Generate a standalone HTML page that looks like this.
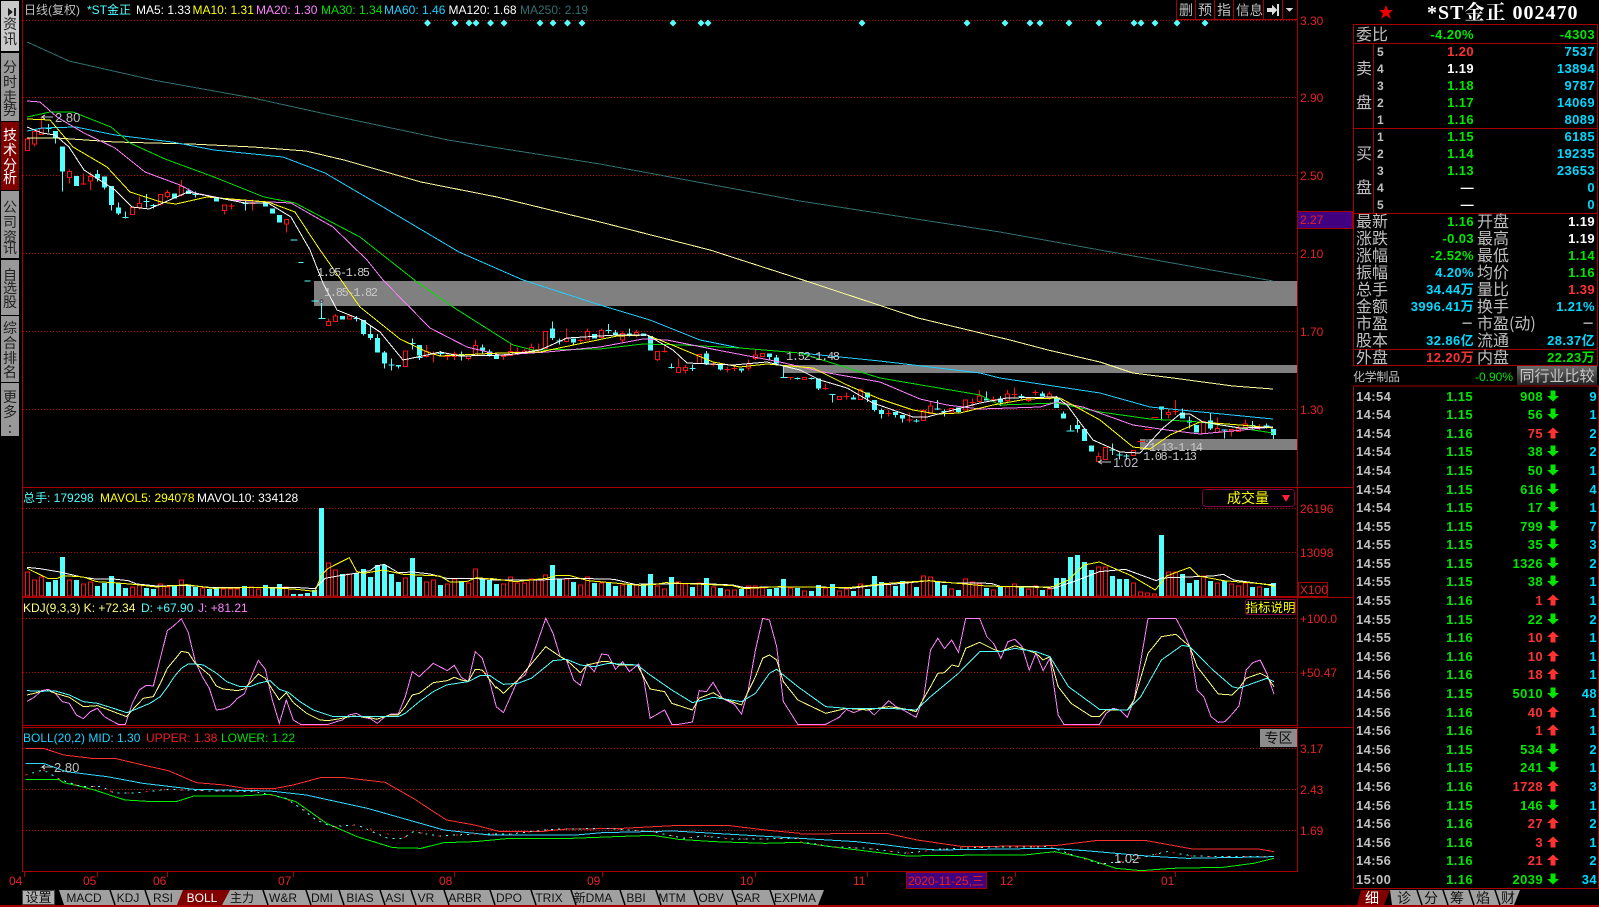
<!DOCTYPE html>
<html><head><meta charset="utf-8"><title>*ST金正 002470</title>
<style>
html,body{margin:0;padding:0;background:#000;overflow:hidden}
svg{display:block}
text{font-family:"Liberation Sans","Noto Sans CJK SC",sans-serif;font-size:12px}
path,polyline,line{vector-effect:non-scaling-stroke;shape-rendering:crispEdges;fill:none}
.cw{stroke:#54ffff}.cb{stroke:#54ffff;stroke-width:5}.rw{stroke:#ff1010}.rb{stroke:#ff1010;fill:#000}
.n{font-weight:bold;font-size:13px;letter-spacing:.4px}
.e{text-anchor:end}.c{text-anchor:middle}
.l{font-size:16px;fill:#c0c0c0;font-family:"WenQuanYi Zen Hei","Noto Sans CJK SC",sans-serif}
.g{fill:#00e600}.r{fill:#ff3232}.w{fill:#fff}.y{fill:#00d8ff}.a{fill:#c0c0c0}
.ax{fill:#e62222}
.m{font-family:"Liberation Mono",monospace;fill:#c8c8c8}
.t{fill:#111;text-anchor:middle}
.s{font-size:14px;fill:#222;font-family:"WenQuanYi Zen Hei","Noto Sans CJK SC",sans-serif}
.grid{stroke:#c00000;stroke-dasharray:1 2}
.b{stroke:#a80000}
</style></head><body>
<svg width="1599" height="907" viewBox="0 0 1599 907" xmlns="http://www.w3.org/2000/svg">
<defs>
<linearGradient id="bg" x1="0" y1="0" x2="0" y2="1"><stop offset="0" stop-color="#6a6a6a"/><stop offset="1" stop-color="#222"/></linearGradient>
<path id="d" d="M-2.5 -5.5h5v5.5h3.5l-6 5.5l-6 -5.5h3.5z" style="fill:#00e600;stroke:none;shape-rendering:auto"/>
<path id="u" d="M-2.5 5.5h5v-5.5h3.5l-6 -5.5l-6 5.5h3.5z" style="fill:#ff3232;stroke:none;shape-rendering:auto"/>
</defs>
<rect width="1599" height="907" fill="#000"/>

<!-- left rail -->
<rect x="1" y="1" width="18" height="50" fill="#c8c8c8"/>
<rect x="1" y="53" width="18" height="68" fill="#999"/>
<rect x="1" y="122" width="18" height="68" fill="#800000"/>
<rect x="1" y="191" width="18" height="67" fill="#999"/>
<rect x="1" y="260" width="18" height="55" fill="#999"/>
<rect x="1" y="316" width="18" height="66" fill="#999"/>
<rect x="1" y="383" width="18" height="53" fill="#999"/>
<path d="M8 8l5 4l-5 4zM14 8h2v8h-2z" style="fill:#222;stroke:none"/>
<text class="s" x="3 3" y="29 44">资讯</text>
<text class="s" x="3 3 3 3" y="72 87 102 115">分时走势</text>
<text class="s" x="3 3 3 3" y="140 155 170 183" style="fill:#fff">技术分析</text>
<text class="s" x="3 3 3 3" y="212 227 242 253">公司资讯</text>
<text class="s" x="3 3 3" y="280 293 307">自选股</text>
<text class="s" x="3 3 3 3" y="333 348 363 377">综合排名</text>
<text class="s" x="3 3" y="402 417">更多</text>
<text class="s" x="8 8" y="427 433">..</text>

<!-- grid -->
<g class="grid">
<path d="M23 20.5H1297M23 97.5H1297M23 175.5H1297M23 253.5H1297M23 331.5H1297M23 409.5H1297M23 508.5H1297M23 552.5H1297M23 618.5H1297M23 672.5H1297M23 748.5H1297M23 789.5H1297M23 830.5H1297"/>
</g>

<!-- zones -->
<rect x="314" y="281" width="983" height="25" fill="#808080"/>
<rect x="783" y="365" width="514" height="8" fill="#808080"/>
<rect x="1140" y="439" width="157" height="11" fill="#808080"/>

<!-- diamonds -->
<path style="fill:#54ffff;stroke:none;shape-rendering:auto" d="M427.500 19.500l3.500 3.500l-3.500 3.500l-3.500 -3.500zM455 19.500l3.500 3.500l-3.500 3.500l-3.500 -3.500zM469 19.500l3.500 3.500l-3.500 3.500l-3.500 -3.500zM476 19.500l3.500 3.500l-3.500 3.500l-3.500 -3.500zM490.500 19.500l3.500 3.500l-3.500 3.500l-3.500 -3.500zM504 19.500l3.500 3.500l-3.500 3.500l-3.500 -3.500zM540 19.500l3.500 3.500l-3.500 3.500l-3.500 -3.500zM553 19.500l3.500 3.500l-3.500 3.500l-3.500 -3.500zM567.500 19.500l3.500 3.500l-3.500 3.500l-3.500 -3.500zM582 19.500l3.500 3.500l-3.500 3.500l-3.500 -3.500zM673 19.500l3.500 3.500l-3.500 3.500l-3.500 -3.500zM701 19.500l3.500 3.500l-3.500 3.500l-3.500 -3.500zM708 19.500l3.500 3.500l-3.500 3.500l-3.500 -3.500zM862 19.500l3.500 3.500l-3.500 3.500l-3.500 -3.500zM967 19.500l3.500 3.500l-3.500 3.500l-3.500 -3.500zM1005 19.500l3.500 3.500l-3.500 3.500l-3.500 -3.500zM1030 19.500l3.500 3.500l-3.500 3.500l-3.500 -3.500zM1040 19.500l3.500 3.500l-3.500 3.500l-3.500 -3.500zM1069 19.500l3.500 3.500l-3.500 3.500l-3.500 -3.500zM1099 19.500l3.500 3.500l-3.500 3.500l-3.500 -3.500zM1134 19.500l3.500 3.500l-3.500 3.500l-3.500 -3.500zM1141 19.500l3.500 3.500l-3.500 3.500l-3.500 -3.500zM1155 19.500l3.500 3.500l-3.500 3.500l-3.500 -3.500zM1177 19.500l3.500 3.500l-3.500 3.500l-3.500 -3.500zM1205 19.500l3.500 3.500l-3.500 3.500l-3.500 -3.500z"/>

<!-- candles -->
<g transform="translate(.5,0) scale(1,.3333)">
<path class="cw" d="M48 372V398M45 385h6M55 413V430M62 515V575M97 510V545M104 562V568M111 615V632M118 608V645M125 635V655M122 652h6M146 582V622M143 604h6M153 612V625M150 617h6M188 565V572M195 575V592M192 583h6M245 600V632M242 610h6M290 720h7M298 787h5M304 843h6M311 903h7"/>
<path class="cb" d="M55 393V413M62 440V515M76 528V558M97 522V535M104 530V562M111 558V615M118 622V640M174 580V595M188 572V582M216 592V604M265 604V620M272 625V640M279 645V668"/>
<path class="rw" d="M34 432V440M41 350V385M69 508V550M83 520V555M80 552h6M90 517V570M139 590V628M160 583V617M167 570V595M181 540V590M224 632V644M231 610V628M228 618h6M252 598V632M249 610h6M286 672V698"/>
<path class="rb" d="M25 417h4V452h-4zM32 394h4V432h-4zM39 385h4V403h-4zM67 515h4V533h-4zM88 530h4V543h-4zM130 622h4V644h-4zM137 610h4V622h-4zM158 583h4V612h-4zM165 577h4V590h-4zM179 560h4V585h-4zM222 615h4V632h-4zM284 658h4V672h-4z"/>
</g>
<g transform="translate(.5,250) scale(1,.3333)">
<path class="cw" d="M321 153V205M318 205h7M356 198V215M353 205h6M363 252V257M370 228V270M377 252V264M384 303V355M391 325V362M388 345h6M398 350V356M412 265V298M409 280h6M419 315V330M416 322h6M440 303V318M437 310h6M461 305V332M482 283V312M489 298V320M552 215V270M559 265V283M556 273h6M573 278V285M608 222V250M605 241h6M615 240V247M629 235V260M671 340V355M668 352h6M692 343V363M689 355h6M706 303V345M720 358V362M741 362V368M769 321V332M776 315V345"/>
<path class="cb" d="M342 198V209M363 210V252M370 252V264M377 264V308M384 308V340M398 345V350M419 285V316M461 312V318M482 292V302M489 305V315M496 315V327M552 235V264M573 265V278M594 252V265M615 247V257M629 250V258M643 250V258M650 258V302M706 310V340M720 345V358M741 355V362M769 310V321M776 322V340"/>
<path class="rw" d="M328 205V215M335 192V198M426 285V305M426 320V322M433 305V338M430 312h6M447 310V330M444 320h6M454 305V312M454 320V330M468 326V332M475 270V287M503 320V330M510 280V305M517 293V315M514 306h6M524 297V303M531 280V293M538 280V305M535 298h6M566 235V265M580 265V282M577 272h6M587 235V245M601 235V241M622 245V250M622 270V278M636 240V247M636 255V262M657 328V333M664 290V308M661 305h6M678 325V352M685 345V352M685 362V370M713 335V350M710 343h6M727 350V368M724 358h6M734 348V363M731 355h6M748 328V342M748 354V362M755 300V315M755 326V330"/>
<path class="rb" d="M326 215h4V226h-4zM333 198h4V214h-4zM347 198h4V207h-4zM403 303h4V350h-4zM424 305h4V320h-4zM452 312h4V320h-4zM466 318h4V326h-4zM473 287h4V316h-4zM501 316h4V320h-4zM508 305h4V316h-4zM522 303h4V310h-4zM529 293h4V303h-4zM543 245h4V295h-4zM564 265h4V274h-4zM585 245h4V270h-4zM599 241h4V262h-4zM620 250h4V270h-4zM634 247h4V255h-4zM655 304h4V328h-4zM676 352h4V368h-4zM683 352h4V362h-4zM697 313h4V340h-4zM746 342h4V354h-4zM753 315h4V326h-4zM760 310h4V320h-4z"/>
</g>
<g transform="translate(.5,340) scale(1,.3333)">
<path class="cw" d="M783 80V113M780 113h7M797 112V118M794 115h6M811 112V118M808 115h6M818 145V150M832 163V187M829 163h6M853 165V172M867 173V186M874 210V215M881 205V236M895 225V232M902 236V248M916 237V248M913 243h6M937 180V210M934 207h6M944 208V230M941 215h6M958 216V218M986 155V175M1000 168V198M1021 162V177M1018 170h6M1042 155V161M1056 168V175M1063 215V221M1070 255V273M1066 273h8M1077 238V278"/>
<path class="cb" d="M818 115V145M853 172V178M867 157V173M874 180V210M881 210V222M895 216V225M902 225V236M958 203V216M986 175V181M1000 175V187M1042 161V170M1056 175V204M1063 221V236M1077 255V267"/>
<path class="rw" d="M790 113V120M787 113h6M825 130V150M822 145h6M839 168V172M846 158V178M843 170h6M860 145V150M888 210V230M885 220h6M909 218V248M906 240h6M930 185V198M972 175V200M969 187h6M979 150V168M993 170V178M1007 150V162M1007 182V190M1014 143V172M1011 163h6M1028 181V186M1035 150V166M1032 157h6M1049 155V162M1049 172V180"/>
<path class="rb" d="M802 112h4V119h-4zM837 170h4V178h-4zM858 150h4V178h-4zM921 212h4V242h-4zM928 198h4V220h-4zM949 205h4V216h-4zM963 180h4V210h-4zM977 168h4V185h-4zM991 178h4V183h-4zM1005 162h4V182h-4zM1026 175h4V181h-4zM1047 162h4V172h-4z"/>
</g>
<g transform="translate(.5,350) scale(1,.3333)">
<path class="cw" d="M1112 280V315M1109 300h6M1119 308V328M1116 315h6M1126 312V330M1123 318h6M1161 178V212M1182 175V187M1189 200V235M1210 190V212M1210 236V240M1224 240V265M1221 240h6M1252 213V238M1249 226h6M1266 220V235M1263 228h6M1273 255V267"/>
<path class="cb" d="M1084 237V273M1091 286V305M1161 170V178M1182 187V206M1189 212V218M1196 225V248M1210 212V236M1273 237V255"/>
<path class="rw" d="M1098 308V319M1137 275h7M1144 238h7M1151 203h7M1168 175V187M1168 194V205M1175 150V195M1172 185h6M1217 202V236M1231 245V260M1238 228V235M1245 208V222M1259 222V240M1256 232h6"/>
<path class="rb" d="M1096 319h4V335h-4zM1103 292h4V328h-4zM1131 302h4V316h-4zM1166 187h4V194h-4zM1201 215h4V250h-4zM1215 236h4V247h-4zM1229 238h4V245h-4zM1236 235h4V245h-4zM1243 222h4V232h-4z"/>
</g>

<!-- MA lines -->
<polyline stroke="#2f6f70" points="27,42 69,61 153,80 253,98 344,118 448,140 600,164 800,201 1000,232 1150,259 1273,281"/>
<polyline stroke="#ffffa0" points="27,138 57,138 115,142 191,144 253,147 306,151 344,160 421,182 497,197 600,222 710,250 800,279 918,318 1010,340 1048,350 1100,362 1133,373 1173,378 1233,386 1273,389"/>
<polyline stroke="#20d0ff" points="27,131 42,128 76,127 115,135 172,142 214,150 283,157 325,173 383,207 459,252 523,280 600,305 650,320 700,340 740,348 800,353 880,361 980,373 1000,378 1100,393 1150,407 1273,419"/>
<polyline stroke="#00e000" points="27,117 50,112 73,112 111,127 130,143 165,159 214,177 264,197 295,203 360,237 417,282 453,307 513,345 533,350 600,349 643,344 683,345 740,348 800,353 880,378 980,395 1000,405 1057,403 1100,412 1150,419 1200,422 1273,433"/>
<polyline stroke="#ff80ff" points="27,101 40,102 57,117 84,133 115,148 145,172 180,185 195,193 230,200 291,203 333,227 367,260 383,280 430,328 467,347 500,355 547,352 600,347 643,339 667,340 717,350 780,362 823,372 880,382 920,399 947,405 980,409 1040,407 1057,402 1083,407 1133,425 1167,430 1200,434 1273,427"/>
<polyline stroke="#ffff00" points="27,119 50,120 73,147 107,167 130,192 161,202 176,204 207,197 268,202 295,212 318,247 360,307 400,339 427,352 440,356 500,353 540,352 583,343 617,336 647,335 677,347 713,362 740,367 767,364 813,368 847,385 880,399 913,410 937,414 960,413 993,405 1027,399 1060,398 1100,420 1133,447 1150,449 1170,435 1200,422 1240,425 1273,428"/>
<polyline stroke="#ffffff" points="27,127 42,133 55,135 69,147 84,170 115,190 132,207 149,209 188,192 245,203 268,203 291,217 310,250 323,283 337,310 362,320 380,332 403,360 427,355 440,352 460,356 507,355 540,350 567,338 617,335 647,335 673,350 687,363 733,365 767,362 800,370 820,380 847,388 873,403 913,417 927,417 953,410 980,403 1007,398 1057,397 1067,405 1093,440 1120,452 1140,453 1163,428 1180,414 1190,414 1203,422 1240,428 1273,427"/>

<!-- main annotations -->
<text x="55" y="122" style="fill:#c0c0c0;font-size:13px">2.80</text>
<path d="M53 117H42l3-2M42 117l3 2" style="stroke:#c0c0c0"/>
<text class="m" x="317" y="276" textLength="53">1.95-1.85</text>
<text class="m" x="324" y="296" textLength="54">1.85-1.82</text>
<text class="m" x="786" y="360" textLength="54">1.52-1.48</text>
<text class="m" x="1149" y="451" textLength="54">1.13-1.14</text>
<text class="m" x="1143" y="460" textLength="54">1.08-1.13</text>
<text x="1113" y="467" style="fill:#b8b8c8;font-size:13px">1.02</text>
<path d="M1111 462H1098l4-2M1098 462l4 2" style="stroke:#c0c0c0"/>
<circle cx="321.500" cy="301" r="1.500" fill="none" stroke="#555"/><circle cx="1147" cy="441" r="1.500" fill="none" stroke="#444"/>

<!-- volume bars -->
<g transform="translate(.5,0)">
<path class="cb" d="M48 582V596M55 580V596M62 557V596M76 580V596M97 586V596M104 583V596M111 576V596M118 583V596M125 588V596M146 588V596M153 589V596M174 586V596M188 586V596M195 587V596M209 589V596M216 587V596M244 586V596M265 585V596M272 587V596M279 584V596M293 594V596M300 594V596M307 593V596M314 590V596M321 508V596M342 574V596M356 573V596M363 569V596M370 577V596M377 565V596M384 565V596M391 574V596M398 582V596M412 558V596M419 577V596M440 585V596M461 581V596M482 578V596M489 580V596M496 584V596M552 565V596M559 579V596M573 582V596M594 583V596M608 583V596M615 586V596M629 584V596M643 585V596M650 574V596M671 577V596M692 587V596M706 578V596M720 588V596M741 589V596M769 589V596M776 588V596M783 579V596M797 588V596M811 591V596M818 585V596M832 584V596M853 591V596M867 589V596M874 576V596M881 582V596M895 586V596M902 581V596M916 587V596M937 582V596M944 585V596M958 590V596M986 588V596M1000 587V596M1021 587V596M1042 590V596M1056 578V596M1063 578V596M1070 557V596M1077 555V596M1084 562V596M1091 570V596M1112 576V596M1119 579V596M1126 579V596M1161 535V596M1182 574V596M1189 583V596M1196 580V596M1210 581V596M1224 581V596M1252 587V596M1266 588V596M1273 583V596"/>
<path class="rw" d="M25 572h4V596h-4zM32 580h4V596h-4zM39 577h4V596h-4zM67 580h4V596h-4zM81 584h4V596h-4zM88 582h4V596h-4zM130 587h4V596h-4zM137 585h4V596h-4zM158 584h4V596h-4zM165 587h4V596h-4zM179 580h4V596h-4zM200 588h4V596h-4zM221 589h4V596h-4zM228 589h4V596h-4zM235 589h4V596h-4zM249 587h4V596h-4zM256 589h4V596h-4zM284 587h4V596h-4zM326 563h4V596h-4zM333 570h4V596h-4zM347 574h4V596h-4zM403 578h4V596h-4zM424 582h4V596h-4zM431 580h4V596h-4zM445 584h4V596h-4zM452 579h4V596h-4zM466 583h4V596h-4zM473 569h4V596h-4zM501 584h4V596h-4zM508 577h4V596h-4zM515 583h4V596h-4zM522 583h4V596h-4zM529 579h4V596h-4zM536 579h4V596h-4zM543 575h4V596h-4zM564 579h4V596h-4zM578 585h4V596h-4zM585 577h4V596h-4zM599 583h4V596h-4zM620 585h4V596h-4zM634 585h4V596h-4zM655 586h4V596h-4zM662 589h4V596h-4zM676 582h4V596h-4zM683 584h4V596h-4zM697 583h4V596h-4zM711 587h4V596h-4zM725 590h4V596h-4zM732 590h4V596h-4zM746 586h4V596h-4zM753 586h4V596h-4zM760 588h4V596h-4zM788 588h4V596h-4zM802 591h4V596h-4zM823 588h4V596h-4zM837 591h4V596h-4zM844 589h4V596h-4zM858 584h4V596h-4zM886 584h4V596h-4zM907 582h4V596h-4zM921 576h4V596h-4zM928 577h4V596h-4zM949 589h4V596h-4zM963 579h4V596h-4zM970 582h4V596h-4zM977 584h4V596h-4zM991 590h4V596h-4zM1005 587h4V596h-4zM1012 584h4V596h-4zM1026 589h4V596h-4zM1033 586h4V596h-4zM1047 589h4V596h-4zM1096 567h4V596h-4zM1103 567h4V596h-4zM1131 583h4V596h-4zM1138 592h4V596h-4zM1145 593h4V596h-4zM1152 594h4V596h-4zM1166 572h4V596h-4zM1173 572h4V596h-4zM1201 576h4V596h-4zM1215 583h4V596h-4zM1229 584h4V596h-4zM1236 586h4V596h-4zM1243 583h4V596h-4zM1257 587h4V596h-4z"/>
</g>
<g transform="translate(0,480) scale(.3333)">
<polyline stroke="#fff" points="81,262 120,266 180,276 240,290 285,297 340,297 385,302 410,312 470,318 560,316 640,323 780,322 880,322 945,326 975,295 1020,287 1060,281 1110,272 1130,258 1153,253 1195,278 1240,276 1290,282 1340,295 1400,295 1485,298"/>
<polyline stroke="#ff0" points="81,265 145,296 170,296 190,287 250,291 290,305 340,308 400,313 470,321 560,314 640,325 780,322 880,327 945,334 965,285 985,265 1048,233 1070,274 1090,280 1150,270 1210,283 1320,288 1350,306 1400,305 1430,293 1485,298"/>
</g>
<g transform="translate(490,490) scale(.5165,.3333)">
<polyline stroke="#fff" points="0,270 100,270 130,267 170,265 240,268 280,283 400,280 470,285 490,292 640,291 700,295 740,287 800,280 850,272 880,278 970,280 990,290 1060,290 1090,295 1130,275 1180,245 1230,238 1290,272 1300,264 1400,258 1420,253 1440,270 1500,283 1520,285"/>
<polyline stroke="#ff0" points="0,265 50,275 110,265 130,256 155,257 190,272 290,286 320,283 340,278 470,287 490,296 560,290 640,292 700,292 770,280 850,272 960,288 1060,292 1090,290 1120,270 1150,225 1180,216 1240,256 1288,300 1310,258 1355,232 1372,258 1420,272 1500,282 1520,290"/>
</g>

<!-- KDJ -->
<g transform="translate(0,480) scale(.3333)">
<polyline stroke="#ff80ff" points="81,664 103,652 124,632 145,628 166,640 187,665 208,670 229,705 250,716 271,695 292,685 313,710 334,722 355,733 376,733 397,670 418,630 439,616 460,618 481,535 502,452 523,436 544,416 565,458 586,545 607,590 628,625 649,690 670,687 691,678 712,655 733,642 754,590 775,541 796,568 817,660 838,730 859,660 880,720 901,733 985,733 1006,726 1027,720 1048,705 1069,700 1090,712 1111,716 1132,730 1153,712 1174,702 1195,702 1216,650 1237,575 1258,590 1300,550 1342,572 1363,556 1384,592 1405,605 1426,515 1447,535 1468,600 1489,680"/>
<polyline stroke="#ffff80" points="81,645 103,640 124,634 145,632 166,640 208,652 250,680 292,677 340,695 380,710 397,690 430,655 460,650 481,610 502,565 523,540 544,514 565,518 586,550 628,585 649,618 670,627 712,632 733,627 754,605 775,582 796,595 817,628 838,660 859,638 880,668 920,700 960,720 985,722 1020,716 1060,708 1110,713 1130,718 1170,705 1195,705 1216,680 1237,645 1258,640 1300,608 1342,602 1363,592 1384,600 1405,604 1426,568 1447,570 1489,625"/>
<polyline stroke="#54ffff" points="81,632 124,634 166,633 208,645 250,665 292,670 340,685 380,698 397,692 450,670 481,650 502,622 523,590 544,565 565,552 586,552 610,555 650,580 680,605 720,620 750,620 775,610 810,602 838,628 865,637 900,665 940,690 1000,710 1100,710 1195,710 1216,700 1258,665 1300,635 1340,615 1384,608 1405,605 1440,587 1470,587 1489,600"/>
</g>
<g transform="translate(490,490) scale(.5165,.3333)">
<polyline stroke="#ff80ff" points="12,650 26,668 54,570 68,555 80,510 108,385 122,430 136,500 148,510 162,570 175,586 188,522 202,545 216,492 229,495 243,538 257,515 270,545 288,522 298,570 310,685 338,660 352,703 365,703 392,696 405,602 419,605 432,577 450,625 473,643 487,672 500,600 514,480 528,385 541,390 555,470 568,635 596,703 650,703 676,682 690,658 704,668 717,660 730,655 744,675 772,632 786,650 800,660 825,682 840,620 853,480 867,445 880,476 894,450 907,487 921,385 948,385 962,440 975,460 989,505 1003,455 1016,448 1030,470 1044,540 1057,490 1071,542 1084,505 1100,675 1111,703 1180,703 1193,670 1206,655 1220,660 1234,682 1247,630 1274,385 1328,385 1342,425 1355,470 1369,600 1382,620 1396,680 1410,697 1423,695 1437,672 1450,648 1464,540 1477,518 1491,510 1504,550 1518,613"/>
<polyline stroke="#ffff80" points="12,590 26,610 54,570 108,470 136,500 148,510 175,548 188,525 216,515 229,515 250,525 285,525 310,597 338,605 352,640 392,660 405,625 432,608 450,625 487,645 514,560 528,505 541,495 555,510 568,575 596,630 650,670 690,655 730,660 772,650 800,656 825,665 853,590 867,550 880,548 894,525 907,530 921,475 948,457 975,478 989,485 1016,467 1030,475 1057,490 1071,510 1084,500 1100,590 1125,640 1165,680 1180,680 1193,660 1220,660 1234,660 1247,630 1274,490 1300,440 1328,433 1355,470 1369,530 1410,612 1437,615 1450,595 1464,565 1491,550 1504,560 1518,590"/>
<polyline stroke="#54ffff" points="12,570 26,583 54,580 80,565 108,530 122,512 148,508 175,525 202,530 229,520 285,525 310,555 352,600 392,638 432,622 487,635 514,610 541,550 555,538 568,555 596,590 650,650 690,655 770,655 825,660 853,620 907,550 948,485 989,485 1016,475 1057,485 1084,500 1120,590 1180,658 1234,660 1260,620 1300,510 1340,466 1355,470 1396,535 1437,590 1450,595 1504,565 1518,575"/>
</g>

<!-- BOLL -->
<g transform="translate(0,730) scale(.5102,.3333)">
<polyline stroke="#ff3030" points="50,55 85,55 125,75 180,85 225,85 280,105 330,122 385,158 440,165 480,175 540,175 575,165 630,142 670,142 755,157 810,205 875,270 930,285 980,305 1060,305 1100,298 1220,295 1320,287 1430,287 1500,300 1568,310"/>
<polyline stroke="#30d8ff" points="50,100 85,100 130,125 210,140 280,160 380,178 530,183 600,195 720,235 870,300 960,315 1130,315 1180,308 1320,303 1400,310 1568,325"/>
<polyline stroke="#00f000" points="50,148 115,148 125,158 160,170 185,180 245,210 300,215 345,215 380,198 470,198 530,193 580,215 640,280 700,320 770,353 825,355 870,338 930,335 1000,325 1120,325 1240,318 1280,316 1330,328 1400,335 1500,340 1568,337"/>
<polyline stroke="#54ffff" stroke-dasharray="2 5" points="50,135 85,120 120,150 160,170 200,170 225,190 270,188 330,178 400,182 500,185 560,205 590,235 620,270 650,290 700,285 760,325 790,325 810,305 860,318 930,312 1000,312 1080,298 1190,295 1280,305 1340,325 1380,318 1440,328 1568,325"/>
<polyline stroke="#ff2020" stroke-dasharray="2 16" points="50,135 85,120 120,150 160,170 200,170 225,190 270,188 330,178 400,182 500,185 560,205 650,290 700,285 790,325 810,305 860,318 930,312 1000,312 1080,298 1190,295 1280,305 1340,325 1380,318 1440,328 1568,325"/>
</g>
<g transform="translate(800,730) scale(.5096,.3333)">
<polyline stroke="#ff3030" points="0,312 170,310 230,330 320,350 500,347 580,332 680,332 770,357 900,357 930,365"/>
<polyline stroke="#30d8ff" points="0,325 110,335 170,345 220,355 270,360 490,355 560,362 680,378 760,385 930,380"/>
<polyline stroke="#00f000" points="0,337 60,350 140,365 210,378 290,376 440,375 500,365 560,385 620,415 670,422 730,415 830,412 890,400 930,385"/>
<polyline stroke="#54ffff" stroke-dasharray="2 5" points="0,335 60,350 130,355 210,370 270,358 350,352 490,350 540,378 590,402 650,390 720,365 770,378 840,380 930,380"/>
<polyline stroke="#ff2020" stroke-dasharray="2 16" points="0,335 60,350 130,355 210,370 270,358 350,352 490,350 540,378 590,402 650,390 720,365 770,378 840,380 930,380"/>
</g>
<text x="54" y="772" style="fill:#c0c0c0;font-size:13px">2.80</text>
<path d="M53 767H42l3-2M42 767l3 2" style="stroke:#c0c0c0"/>
<text x="1114" y="863" style="fill:#c0c0c0;font-size:13px">1.02</text>

<!-- frame -->
<g class="b">
<path d="M22.500 0V871.500H1297.500V0"/>
<path d="M22 487.500H1353M22 597.500H1353M22 725.500H1297M22 727.500H1353"/>
<path d="M22 596.500H1297" />
<path d="M0 906H1599" style="stroke-width:2"/>
</g>

<!-- top legend -->
<text x="24" y="14" style="fill:#c0c0c0">日线(复权)</text>
<text x="87" y="14" style="fill:#54ffff">*ST金正</text>
<text x="136" y="14" class="w">MA5: 1.33</text>
<text x="192.500" y="14" style="fill:#ff0">MA10: 1.31</text>
<text x="256" y="14" style="fill:#ff80ff">MA20: 1.30</text>
<text x="321" y="14" style="fill:#00e000">MA30: 1.34</text>
<text x="384" y="14" style="fill:#20d0ff">MA60: 1.46</text>
<text x="448.500" y="14" class="w">MA120: 1.68</text>
<text x="520" y="14" style="fill:#2f6f70">MA250: 2.19</text>

<!-- top right buttons -->
<path class="b" d="M1176.500 0V19.500H1297M1195.500 0V19M1214.500 0V19M1233.500 0V19M1263.500 0V19M1282.500 0V19"/>
<text x="1179" y="15" style="font-size:14px;fill:#c0c0c0">删</text>
<text x="1198" y="15" style="font-size:14px;fill:#c0c0c0">预</text>
<text x="1217" y="15" style="font-size:14px;fill:#c0c0c0">指</text>
<text x="1236" y="15" style="font-size:13.500px;fill:#c0c0c0">信息</text>
<path d="M1267 8h5v-3l5 5l-5 5v-3h-5zM1277 4h2v12h-2z" style="fill:#ddd;stroke:none"/>
<path d="M1286 8h7l-3.500 4z" style="fill:#ddd;stroke:none"/>

<!-- axis labels -->
<g class="ax">
<text x="1300" y="25">3.30</text><text x="1300" y="102">2.90</text><text x="1300" y="180">2.50</text><text x="1300" y="258">2.10</text><text x="1300" y="336">1.70</text><text x="1300" y="414">1.30</text>
<text x="1300" y="513">26196</text><text x="1300" y="557">13098</text>
<text x="1300" y="623">+100.0</text><text x="1300" y="677">+50.47</text>
<text x="1300" y="753">3.17</text><text x="1300" y="794">2.43</text><text x="1300" y="835">1.69</text>
<text x="9" y="885">04</text><text x="83" y="885">05</text><text x="153" y="885">06</text><text x="278" y="885">07</text><text x="439" y="885">08</text><text x="587" y="885">09</text><text x="740" y="885">10</text><text x="853" y="885">11</text><text x="1000" y="885">12</text><text x="1161" y="885">01</text>
</g>
<path class="b" d="M24.500 871V877M97.500 871V877M167.500 871V877M293.500 871V877M454.500 871V877M602.500 871V877M755.500 871V877M867.500 871V877M1015.500 871V877M1175.500 871V877"/>
<rect x="1297.500" y="211.500" width="55" height="17" fill="#400080" stroke="#a80000"/>
<text x="1300" y="224" class="ax">2.27</text>
<rect x="1298.500" y="582.500" width="29" height="14" fill="none" stroke="#a80000"/>
<text x="1300" y="594" class="ax">X100</text>
<rect x="906.500" y="872.500" width="80" height="16" fill="#400080" stroke="#a80000"/>
<text x="908" y="885" class="ax">2020-11-25,三</text>

<!-- pane legends -->
<text x="23" y="502" style="fill:#54ffff">总手: 179298</text>
<text x="100" y="502" style="fill:#ff0">MAVOL5: 294078</text>
<text x="197" y="502" style="fill:#fff">MAVOL10: 334128</text>
<text x="23" y="612" style="fill:#ffff80">KDJ(9,3,3) K: +72.34</text>
<text x="141" y="612" style="fill:#54ffff">D: +67.90</text>
<text x="198" y="612" style="fill:#ff80ff">J: +81.21</text>
<text x="23" y="742" style="fill:#20d0ff">BOLL(20,2) MID: 1.30</text>
<text x="146" y="742" style="fill:#f02020">UPPER: 1.38</text>
<text x="221" y="742" style="fill:#00e000">LOWER: 1.22</text>

<!-- buttons on panes -->
<rect x="1202.500" y="489.500" width="92" height="17" rx="3" fill="#000" stroke="#800040"/>
<text x="1248" y="503" class="c" style="font-size:14px;fill:#ff0">成交量</text>
<path d="M1282 495h8l-4 7z" style="fill:#ff2040;stroke:none"/>
<rect x="1245.500" y="599.500" width="50" height="15" rx="2" fill="#000" stroke="#800040"/>
<text x="1270.500" y="612" class="c" style="font-size:12.500px;fill:#ff0">指标说明</text>
<rect x="1260" y="729" width="37" height="18" fill="#8c8c8c"/>
<text x="1278.500" y="743" class="c" style="font-size:14px;fill:#111">专区</text>

<!-- bottom tabs -->
<rect x="22.500" y="890.500" width="32" height="14" fill="#b0b0b0" stroke="#444"/>
<text x="38.500" y="902" class="t" style="font-size:13px">设置</text>
<polygon points="59,890 824,890 818,905 64,905" fill="#a0a0a0"/>
<path d="M110 890L115 905M145 890L150 905M263 890L268 905M306 890L311 905M339 890L344 905M380 890L385 905M411 890L416 905M444 890L449 905M490 890L495 905M531 890L536 905M571 890L576 905M620 890L625 905M656 890L661 905M694 890L699 905M732 890L737 905M770 890L775 905" style="stroke:#000;shape-rendering:auto;stroke-width:1.500"/>
<polygon points="183,890 230,890 222,905 177,905" fill="#800000"/>
<g>
<text x="84" y="902" class="t">MACD</text><text x="128" y="902" class="t">KDJ</text><text x="163" y="902" class="t">RSI</text><text x="202" y="902" class="t" style="fill:#fff">BOLL</text><text x="242" y="902" class="t">主力</text><text x="283" y="902" class="t">W&amp;R</text><text x="322" y="902" class="t">DMI</text><text x="360" y="902" class="t">BIAS</text><text x="395" y="902" class="t">ASI</text><text x="426" y="902" class="t">VR</text><text x="465" y="902" class="t">ARBR</text><text x="509" y="902" class="t">DPO</text><text x="549" y="902" class="t">TRIX</text><text x="593" y="902" class="t">新DMA</text><text x="636" y="902" class="t">BBI</text><text x="672" y="902" class="t">MTM</text><text x="711" y="902" class="t">OBV</text><text x="748" y="902" class="t">SAR</text><text x="795" y="902" class="t">EXPMA</text>
</g>

<!-- right tabs -->
<polygon points="1390,890 1520,890 1514,905 1392,905" fill="#a0a0a0"/>
<path d="M1417 890L1422 905M1443 890L1448 905M1469 890L1474 905M1495 890L1500 905" style="stroke:#000;shape-rendering:auto;stroke-width:1.500"/>
<polygon points="1361,890 1390,890 1384,905 1357,905" fill="#800000"/>
<text x="1372" y="903" class="t" style="fill:#fff;font-size:14px">细</text><text x="1404" y="903" class="t" style="font-size:14px">诊</text><text x="1431" y="903" class="t" style="font-size:14px">分</text><text x="1457" y="903" class="t" style="font-size:14px">筹</text><text x="1483" y="903" class="t" style="font-size:14px">焰</text><text x="1508" y="903" class="t" style="font-size:14px">财</text>

<!-- right panel title -->
<polygon points="1386,5 1388,10 1393,10 1389,13.500 1391,19 1386,15.500 1381,19 1383,13.500 1379,10 1384,10" fill="#e80000"/>
<text x="1427" y="19" style="font-family:'Liberation Serif','Noto Serif CJK SC',serif;font-size:20px;font-weight:bold;fill:#fff;letter-spacing:1px">*ST金正 002470</text>
<path class="b" d="M1353.500 24.500H1597.500V365.500H1353.500ZM1353 43.500H1597M1353 128.500H1597M1353 213.500H1597M1353 349.500H1597M1373.500 43V213"/>

<text class="l" x="1356" y="40">委比</text>
<text class="n g e" x="1474" y="39">-4.20%</text><text class="n g e" x="1595" y="39">-4303</text>
<text class="l" x="1356" y="74">卖</text><text class="l" x="1356" y="108">盘</text><text class="l" x="1356" y="159">买</text><text class="l" x="1356" y="193">盘</text>
<g class="n a">
<text x="1377" y="56">5</text><text x="1377" y="73">4</text><text x="1377" y="90">3</text><text x="1377" y="107">2</text><text x="1377" y="124">1</text><text x="1377" y="141">1</text><text x="1377" y="158">2</text><text x="1377" y="175">3</text><text x="1377" y="192">4</text><text x="1377" y="209">5</text>
</g>
<g class="n e">
<text class="n e r" x="1474" y="56">1.20</text><text class="n e w" x="1474" y="73">1.19</text><text class="n e g" x="1474" y="90">1.18</text><text class="n e g" x="1474" y="107">1.17</text><text class="n e g" x="1474" y="124">1.16</text><text class="n e g" x="1474" y="141">1.15</text><text class="n e g" x="1474" y="158">1.14</text><text class="n e g" x="1474" y="175">1.13</text><text class="n e w" x="1474" y="192">—</text><text class="n e w" x="1474" y="209">—</text>
<text class="n e y" x="1595" y="56">7537</text><text class="n e y" x="1595" y="73">13894</text><text class="n e y" x="1595" y="90">9787</text><text class="n e y" x="1595" y="107">14069</text><text class="n e y" x="1595" y="124">8089</text><text class="n e y" x="1595" y="141">6185</text><text class="n e y" x="1595" y="158">19235</text><text class="n e y" x="1595" y="175">23653</text><text class="n e y" x="1595" y="192">0</text><text class="n e y" x="1595" y="209">0</text>
</g>
<text class="l" x="1356" y="227">最新</text><text class="l" x="1477" y="227">开盘</text><text class="n e g" x="1474" y="226">1.16</text><text class="n e w" x="1595" y="226">1.19</text>
<text class="l" x="1356" y="244">涨跌</text><text class="l" x="1477" y="244">最高</text><text class="n e g" x="1474" y="243">-0.03</text><text class="n e w" x="1595" y="243">1.19</text>
<text class="l" x="1356" y="261">涨幅</text><text class="l" x="1477" y="261">最低</text><text class="n e g" x="1474" y="260">-2.52%</text><text class="n e g" x="1595" y="260">1.14</text>
<text class="l" x="1356" y="278">振幅</text><text class="l" x="1477" y="278">均价</text><text class="n e y" x="1474" y="277">4.20%</text><text class="n e g" x="1595" y="277">1.16</text>
<text class="l" x="1356" y="295">总手</text><text class="l" x="1477" y="295">量比</text><text class="n e y" x="1474" y="294">34.44万</text><text class="n e r" x="1595" y="294">1.39</text>
<text class="l" x="1356" y="312">金额</text><text class="l" x="1477" y="312">换手</text><text class="n e y" x="1474" y="311">3996.41万</text><text class="n e y" x="1595" y="311">1.21%</text>
<text class="l" x="1356" y="329">市盈</text><text class="l" x="1477" y="329">市盈(动)</text><text class="n e a" x="1474" y="328">－</text><text class="n e a" x="1595" y="328">－</text>
<text class="l" x="1356" y="346">股本</text><text class="l" x="1477" y="346">流通</text><text class="n e y" x="1474" y="345">32.86亿</text><text class="n e y" x="1595" y="345">28.37亿</text>
<text class="l" x="1356" y="363">外盘</text><text class="l" x="1477" y="363">内盘</text><text class="n e r" x="1474" y="362">12.20万</text><text class="n e g" x="1595" y="362">22.23万</text>

<!-- industry row -->
<text x="1353" y="381" style="font-size:12px;fill:#c0c0c0" textLength="47">化学制品</text>
<text x="1513" y="381" class="e g">-0.90%</text>
<rect x="1517" y="366" width="80" height="19" fill="url(#bg)"/>
<text x="1557" y="381" class="c" style="font-size:15px;fill:#c8c8c8;font-family:'WenQuanYi Zen Hei','Noto Sans CJK SC',sans-serif">同行业比较</text>

<!-- ticks -->
<path class="b" d="M1353.500 386H1598.500V888.500H1353.500Z"/>
<g>
<text class="n a" x="1356" y="401">14:54</text><text class="n a" x="1356" y="419">14:54</text><text class="n a" x="1356" y="438">14:54</text><text class="n a" x="1356" y="456">14:54</text><text class="n a" x="1356" y="475">14:54</text><text class="n a" x="1356" y="494">14:54</text><text class="n a" x="1356" y="512">14:54</text><text class="n a" x="1356" y="531">14:55</text><text class="n a" x="1356" y="549">14:55</text><text class="n a" x="1356" y="568">14:55</text><text class="n a" x="1356" y="586">14:55</text><text class="n a" x="1356" y="605">14:55</text><text class="n a" x="1356" y="624">14:55</text><text class="n a" x="1356" y="642">14:55</text><text class="n a" x="1356" y="661">14:56</text><text class="n a" x="1356" y="679">14:56</text><text class="n a" x="1356" y="698">14:56</text><text class="n a" x="1356" y="717">14:56</text><text class="n a" x="1356" y="735">14:56</text><text class="n a" x="1356" y="754">14:56</text><text class="n a" x="1356" y="772">14:56</text><text class="n a" x="1356" y="791">14:56</text><text class="n a" x="1356" y="810">14:56</text><text class="n a" x="1356" y="828">14:56</text><text class="n a" x="1356" y="847">14:56</text><text class="n a" x="1356" y="865">14:56</text><text class="n a" x="1356" y="884">15:00</text>
</g>
<g>
<text class="n e g" x="1473" y="401">1.15</text><text class="n e g" x="1473" y="419">1.15</text><text class="n e g" x="1473" y="438">1.16</text><text class="n e g" x="1473" y="456">1.15</text><text class="n e g" x="1473" y="475">1.15</text><text class="n e g" x="1473" y="494">1.15</text><text class="n e g" x="1473" y="512">1.15</text><text class="n e g" x="1473" y="531">1.15</text><text class="n e g" x="1473" y="549">1.15</text><text class="n e g" x="1473" y="568">1.15</text><text class="n e g" x="1473" y="586">1.15</text><text class="n e g" x="1473" y="605">1.16</text><text class="n e g" x="1473" y="624">1.15</text><text class="n e g" x="1473" y="642">1.16</text><text class="n e g" x="1473" y="661">1.16</text><text class="n e g" x="1473" y="679">1.16</text><text class="n e g" x="1473" y="698">1.15</text><text class="n e g" x="1473" y="717">1.16</text><text class="n e g" x="1473" y="735">1.16</text><text class="n e g" x="1473" y="754">1.15</text><text class="n e g" x="1473" y="772">1.15</text><text class="n e g" x="1473" y="791">1.16</text><text class="n e g" x="1473" y="810">1.15</text><text class="n e g" x="1473" y="828">1.16</text><text class="n e g" x="1473" y="847">1.16</text><text class="n e g" x="1473" y="865">1.16</text><text class="n e g" x="1473" y="884">1.16</text>
</g>
<g>
<text class="n e g" x="1543" y="401">908</text><text class="n e g" x="1543" y="419">56</text><text class="n e r" x="1543" y="438">75</text><text class="n e g" x="1543" y="456">38</text><text class="n e g" x="1543" y="475">50</text><text class="n e g" x="1543" y="494">616</text><text class="n e g" x="1543" y="512">17</text><text class="n e g" x="1543" y="531">799</text><text class="n e g" x="1543" y="549">35</text><text class="n e g" x="1543" y="568">1326</text><text class="n e g" x="1543" y="586">38</text><text class="n e r" x="1543" y="605">1</text><text class="n e g" x="1543" y="624">22</text><text class="n e r" x="1543" y="642">10</text><text class="n e r" x="1543" y="661">10</text><text class="n e r" x="1543" y="679">18</text><text class="n e g" x="1543" y="698">5010</text><text class="n e r" x="1543" y="717">40</text><text class="n e r" x="1543" y="735">1</text><text class="n e g" x="1543" y="754">534</text><text class="n e g" x="1543" y="772">241</text><text class="n e r" x="1543" y="791">1728</text><text class="n e g" x="1543" y="810">146</text><text class="n e r" x="1543" y="828">27</text><text class="n e r" x="1543" y="847">3</text><text class="n e r" x="1543" y="865">21</text><text class="n e g" x="1543" y="884">2039</text>
</g>
<g>
<use href="#d" x="1553" y="396"/><use href="#d" x="1553" y="414"/><use href="#u" x="1553" y="433"/><use href="#d" x="1553" y="451"/><use href="#d" x="1553" y="470"/><use href="#d" x="1553" y="489"/><use href="#d" x="1553" y="507"/><use href="#d" x="1553" y="526"/><use href="#d" x="1553" y="544"/><use href="#d" x="1553" y="563"/><use href="#d" x="1553" y="581"/><use href="#u" x="1553" y="600"/><use href="#d" x="1553" y="619"/><use href="#u" x="1553" y="637"/><use href="#u" x="1553" y="656"/><use href="#u" x="1553" y="674"/><use href="#d" x="1553" y="693"/><use href="#u" x="1553" y="712"/><use href="#u" x="1553" y="730"/><use href="#d" x="1553" y="749"/><use href="#d" x="1553" y="767"/><use href="#u" x="1553" y="786"/><use href="#d" x="1553" y="805"/><use href="#u" x="1553" y="823"/><use href="#u" x="1553" y="842"/><use href="#u" x="1553" y="860"/><use href="#d" x="1553" y="879"/>
</g>
<g>
<text class="n e y" x="1597" y="401">9</text><text class="n e y" x="1597" y="419">1</text><text class="n e y" x="1597" y="438">2</text><text class="n e y" x="1597" y="456">2</text><text class="n e y" x="1597" y="475">1</text><text class="n e y" x="1597" y="494">4</text><text class="n e y" x="1597" y="512">1</text><text class="n e y" x="1597" y="531">7</text><text class="n e y" x="1597" y="549">3</text><text class="n e y" x="1597" y="568">2</text><text class="n e y" x="1597" y="586">1</text><text class="n e y" x="1597" y="605">1</text><text class="n e y" x="1597" y="624">2</text><text class="n e y" x="1597" y="642">1</text><text class="n e y" x="1597" y="661">1</text><text class="n e y" x="1597" y="679">1</text><text class="n e y" x="1597" y="698">48</text><text class="n e y" x="1597" y="717">1</text><text class="n e y" x="1597" y="735">1</text><text class="n e y" x="1597" y="754">2</text><text class="n e y" x="1597" y="772">1</text><text class="n e y" x="1597" y="791">3</text><text class="n e y" x="1597" y="810">1</text><text class="n e y" x="1597" y="828">2</text><text class="n e y" x="1597" y="847">1</text><text class="n e y" x="1597" y="865">2</text><text class="n e y" x="1597" y="884">34</text>
</g>
</svg>
</body></html>
